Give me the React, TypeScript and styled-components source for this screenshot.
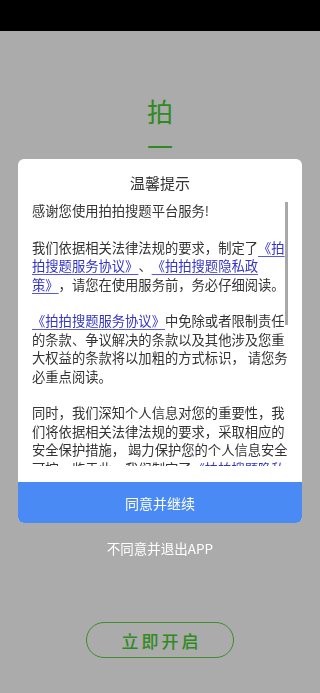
import React from "react";
import styled, { createGlobalStyle } from "styled-components";

const Global = createGlobalStyle`
  html, body { margin: 0; padding: 0; background: #ababab; }
  body { font-family: "Noto Sans CJK SC", "Noto Sans", sans-serif; text-spacing-trim: space-all; }
  * { box-sizing: border-box; }
`;

const Page = styled.div`
  height: 693px;
  display: flex;
  flex-direction: column;
  align-items: center;
  background: #ababab;
`;

const StatusBar = styled.div`
  width: 100%;
  height: 31px;
  background: #000;
  flex: none;
`;

const Hero = styled.div`
  margin-top: 62px;
  display: flex;
  flex-direction: column;
  align-items: center;
  color: #2f8a1f;
  font-size: 26px;
  line-height: 35px;
`;

const StartButton = styled.button`
  margin-top: auto;
  margin-bottom: 35px;
  width: 148px;
  height: 36px;
  border: 1.5px solid #3c8c2c;
  border-radius: 18px;
  background: transparent;
  color: #2f8a1f;
  font-family: "Noto Sans CJK SC", sans-serif;
  font-size: 17px;
  font-weight: 500;
  letter-spacing: 3px;
  padding: 0 0 0 3px;
`;

const Overlay = styled.div`
  position: fixed;
  inset: 0;
  display: flex;
  flex-direction: column;
  align-items: center;
  padding-top: 159px;
`;

const Dialog = styled.div`
  width: 284px;
  background: #fff;
  border-radius: 6px;
  overflow: hidden;
  display: flex;
  flex-direction: column;
`;

const Title = styled.div`
  padding-top: 14px;
  height: 43px;
  line-height: 20px;
  text-align: center;
  font-size: 15px;
  color: #333;
`;

const ScrollFrame = styled.div`
  position: relative;
  margin: 0 14px 16px 14px;
  height: 264px;
`;

const Scroll = styled.div`
  height: 100%;
  padding-right: 3px;
  overflow: hidden;
  font-size: 13.3px;
  line-height: 18.4px;
  color: #333;
  white-space: nowrap;
  text-spacing-trim: space-all;
`;

const Thumb = styled.div`
  position: absolute;
  top: 0;
  right: 0;
  width: 3px;
  height: 123px;
  background: #a8a8a8;
`;

const Link = styled.span`
  color: #3434c4;
  text-decoration: underline;
  text-decoration-color: #5a5ad8;
  text-underline-offset: 3px;
`;

const AgreeButton = styled.button`
  height: 41px;
  border: none;
  background: #4a8af4;
  color: #fff;
  font-family: "Noto Sans CJK SC", sans-serif;
  font-size: 14px;
  padding: 0;
`;

const Disagree = styled.div`
  margin-top: 15px;
  color: #fff;
  font-size: 13.5px;
  line-height: 20px;
`;

export default function App() {
  return (
    <>
      <Global />
      <Page>
        <StatusBar />
        <Hero>
          <span>拍</span>
          <span>一</span>
          <span>拍</span>
        </Hero>
        <StartButton>立即开启</StartButton>
      </Page>
      <Overlay>
        <Dialog>
          <Title>温馨提示</Title>
          <ScrollFrame>
            <Scroll>
              感谢您使用拍拍搜题平台服务!<br />
              <br />
              我们依据相关法律法规的要求，制定了<Link>《拍<br />拍搜题服务协议》</Link>、<Link>《拍拍搜题隐私政<br />策》</Link>，请您在使用服务前，务必仔细阅读。<br />
              <br />
              <Link>《拍拍搜题服务协议》</Link>中免除或者限制责任<br />
              的条款、争议解决的条款以及其他涉及您重<br />
              大权益的条款将以加粗的方式标识， 请您务<br />
              必重点阅读。<br />
              <br />
              同时，我们深知个人信息对您的重要性，我<br />
              们将依据相关法律法规的要求，采取相应的<br />
              安全保护措施， 竭力保护您的个人信息安全<br />
              可控。鉴于此，我们制定了<Link>《拍拍搜题隐私<br />政策》</Link>并提醒您：<br />
              <br />
              1.在您使用拍拍搜题的各项产品或服务前，<br />
              请您务必仔细阅读并透彻理解本政策，在确<br />
              认充分理解并同意后使用相关产品或服务。<br />
            </Scroll>
            <Thumb />
          </ScrollFrame>
          <AgreeButton>同意并继续</AgreeButton>
        </Dialog>
        <Disagree>不同意并退出APP</Disagree>
      </Overlay>
    </>
  );
}
